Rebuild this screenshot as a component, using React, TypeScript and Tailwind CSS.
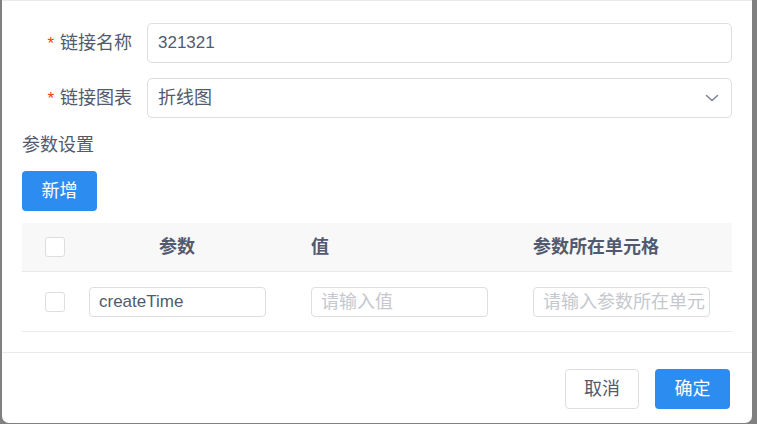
import React from 'react';

const font = { fontFamily: '"Liberation Sans", "Noto Sans CJK SC", sans-serif' };

const Checkbox = () => (
    <span className="block w-[20px] h-[20px] rounded-[3px] border border-[#dcdee2] bg-white" />
);

const FormItem = ({ label, children }: { label: string; children: React.ReactNode }) => (
    <div className="flex items-center h-[40px]">
        <label className="w-[125px] pr-[15px] text-right text-[18px] text-[#515a6e] whitespace-nowrap">
            <span className="text-[#ed4014] text-[17px] mr-[6px]">*</span>
            {label}
        </label>
        <div className="flex-1 h-full">{children}</div>
    </div>
);

// placeholder wraps to a hidden second line, so only what fits is shown
const CellInput = ({ value, placeholder }: { value?: string; placeholder: string }) => (
    <div className="w-[177px] h-[30px] border border-[#dcdee2] rounded-[4px] flex items-center pl-[9px] pr-[1px]">
        <div className={`flex-1 h-[26px] leading-[26px] overflow-hidden ${value ? 'text-[17px] text-[#515a6e]' : 'text-[18px] text-[#c5c8ce]'}`}>
            {value || placeholder}
        </div>
    </div>
);

export default function App() {
    const rows = [{ name: 'createTime', value: '', cell: '' }];

    return (
        <div style={font} className="w-[757px] h-[424px] overflow-hidden bg-[#808080] pl-[2px] pr-[5px]">
            <div className="w-[750px] h-[423px] bg-white border-t border-[#e8eaec] rounded-b-[7px] flex flex-col">
                <div className="px-[20px] pt-[22px] pb-[20px] border-b border-[#e8eaec]">
                    <FormItem label="链接名称">
                        <div className="h-full border border-[#dcdee2] rounded-[5px] flex items-center px-[10px] text-[17px] text-[#515a6e]">
                            321321
                        </div>
                    </FormItem>
                    <div className="mt-[15px]">
                        <FormItem label="链接图表">
                            <div className="h-full border border-[#dcdee2] rounded-[5px] flex items-center justify-between pl-[10px] pr-[12px] text-[18px] text-[#515a6e]">
                                <span>折线图</span>
                                <svg width="14" height="8" viewBox="0 0 14 8" fill="none" stroke="#808695" strokeWidth="1.6" strokeLinecap="round" strokeLinejoin="round">
                                    <path d="M1.5 1.5l5.5 5 5.5-5" />
                                </svg>
                            </div>
                        </FormItem>
                    </div>

                    <div className="mt-[15px] h-[24px] leading-[24px] text-[18px] text-[#515a6e]">参数设置</div>

                    <button className="mt-[14px] w-[75px] h-[40px] rounded-[4px] bg-[#2d8cf0] text-white text-[18px]">
                        新增
                    </button>

                    <div className="mt-[12px]">
                        <div className="grid grid-cols-[67px_222px_222px_1fr] h-[49px] items-center bg-[#f8f8f9] border-b border-[#e8eaec] text-[18px] font-bold text-[#515a6e]">
                            <div className="flex justify-center pr-[2px]"><Checkbox /></div>
                            <div className="w-[176px] text-center">参数</div>
                            <div>值</div>
                            <div>参数所在单元格</div>
                        </div>
                        {rows.map((r, i) => (
                            <div key={i} className="grid grid-cols-[67px_222px_222px_1fr] h-[60px] items-center border-b border-[#e8eaec]">
                                <div className="flex justify-center pr-[2px]"><Checkbox /></div>
                                <CellInput value={r.name} placeholder="请输入参数" />
                                <CellInput value={r.value} placeholder="请输入值" />
                                <CellInput value={r.cell} placeholder="请输入参数所在单元格" />
                            </div>
                        ))}
                    </div>
                </div>

                <div className="flex justify-end gap-[16px] pt-[16px] pr-[22px]">
                    <button className="w-[74px] h-[40px] rounded-[4px] border border-[#dcdee2] bg-white text-[18px] text-[#515a6e]">
                        取消
                    </button>
                    <button className="w-[75px] h-[40px] rounded-[4px] bg-[#2d8cf0] text-white text-[18px]">
                        确定
                    </button>
                </div>
            </div>
        </div>
    );
}
